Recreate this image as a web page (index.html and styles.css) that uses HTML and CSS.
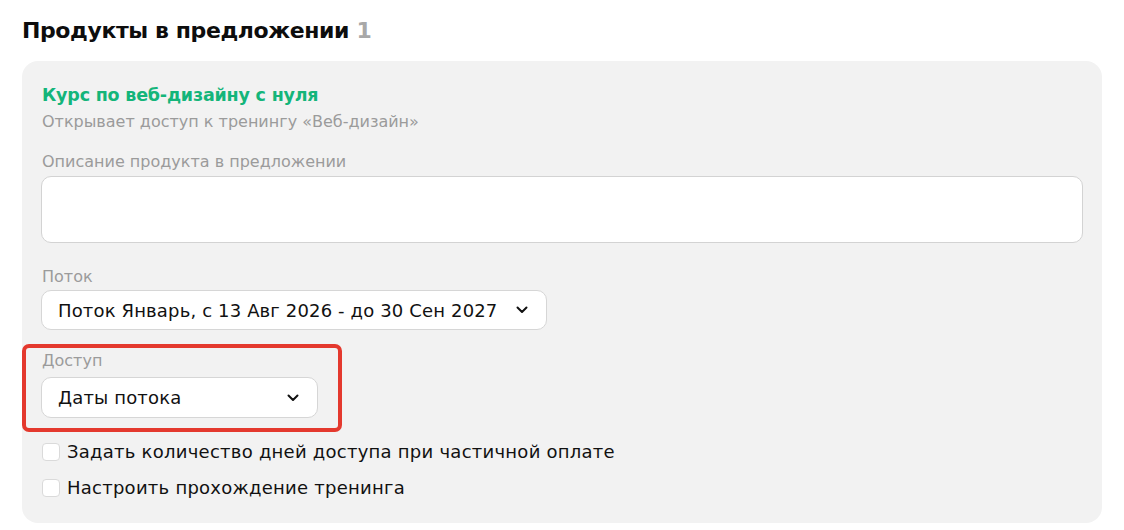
FILE: index.html
```html
<!DOCTYPE html>
<html lang="ru">
<head>
<meta charset="utf-8">
<title>Продукты в предложении</title>
<link rel="stylesheet" href="styles.css">
</head>
<body>
<div class="page">
  <h2 class="title">Продукты в предложении <span class="count">1</span></h2>
  <div class="card">
    <div class="product-name">Курс по веб-дизайну с нуля</div>
    <div class="product-sub">Открывает доступ к тренингу «Веб-дизайн»</div>

    <div class="field field-desc">
      <div class="label">Описание продукта в предложении</div>
      <div class="textarea"></div>
    </div>

    <div class="field field-stream">
      <div class="label">Поток</div>
      <div class="select select-stream">
        <span>Поток Январь, с 13 Авг 2026 - до 30 Сен 2027</span>
        <svg class="chev" viewBox="0 0 12 8" width="12" height="8"><path d="M1.5 1.5 L6 6 L10.5 1.5" fill="none" stroke="#111" stroke-width="2" stroke-linecap="round" stroke-linejoin="round"/></svg>
      </div>
    </div>

    <div class="highlight">
      <div class="label">Доступ</div>
      <div class="select select-access">
        <span>Даты потока</span>
        <svg class="chev" viewBox="0 0 12 8" width="12" height="8"><path d="M1.5 1.5 L6 6 L10.5 1.5" fill="none" stroke="#111" stroke-width="2" stroke-linecap="round" stroke-linejoin="round"/></svg>
      </div>
    </div>

    <div class="checks">
      <label class="check"><span class="box"></span><span>Задать количество дней доступа при частичной оплате</span></label>
      <label class="check"><span class="box"></span><span>Настроить прохождение тренинга</span></label>
    </div>
  </div>
</div>
</body>
</html>
```

FILE: styles.css
```css
* { box-sizing: border-box; }
html, body { margin: 0; padding: 0; background: #fff; }
body {
  font-family: "DejaVu Sans", "Noto Sans", "Liberation Sans", sans-serif;
  color: #111;
}
.page {
  padding: 16px 22px 0 22px;
  width: 1124px;
}
.title {
  margin: 0;
  font-size: 22px;
  line-height: 30px;
  font-weight: 700;
  color: #0d0d0d;
  letter-spacing: -0.4px;
}
.count { color: #a8a8a8; }
.card {
  margin-top: 15px;
  width: 1080px;
  background: #f2f2f2;
  border-radius: 16px;
  padding: 22px 19px 26px 19px;
  display: flex;
  flex-direction: column;
}
.product-name {
  font-size: 17.5px;
  line-height: 24px;
  font-weight: 700;
  color: #14b57a;
  padding-left: 1px;
  letter-spacing: -0.2px;
}
.product-sub {
  margin-top: 5px;
  font-size: 16px;
  line-height: 20px;
  color: #9b9b9b;
  padding-left: 1px;
}
.label {
  font-size: 16px;
  line-height: 20px;
  color: #9b9b9b;
  padding-left: 1px;
}
.field-desc { margin-top: 20px; }
.textarea {
  margin-top: 4px;
  height: 67px;
  background: #fff;
  border: 1px solid #d3d3d3;
  border-radius: 10px;
}
.field-stream { margin-top: 24px; }
.select {
  margin-top: 3px;
  height: 40px;
  background: #fff;
  border: 1px solid #d6d6d6;
  border-radius: 10px;
  display: flex;
  align-items: center;
  justify-content: space-between;
  padding: 0 18px 0 16px;
  font-size: 18px;
  letter-spacing: 0.15px;
  color: #111;
}
.select-stream { width: 506px; }
.select-access { width: 277px; margin-top: 6px; height: 41px; padding-right: 18px; }
.chev { flex: none; }
.highlight {
  margin: 14px 0 0 -19px;
  width: 320px;
  border: 4px solid #e4392e;
  border-radius: 7px;
  padding: 3px 0 10px 15px;
}
.checks {
  margin-top: 11px;
  display: flex;
  flex-direction: column;
  gap: 18px;
}
.check {
  display: flex;
  align-items: center;
  gap: 7px;
  font-size: 18px;
  line-height: 18px;
  letter-spacing: 0.25px;
  color: #111;
  padding-left: 1px;
}
.box {
  width: 18px;
  height: 18px;
  background: #fff;
  border: 1px solid #dadada;
  border-radius: 4px;
  flex: none;
}
```
